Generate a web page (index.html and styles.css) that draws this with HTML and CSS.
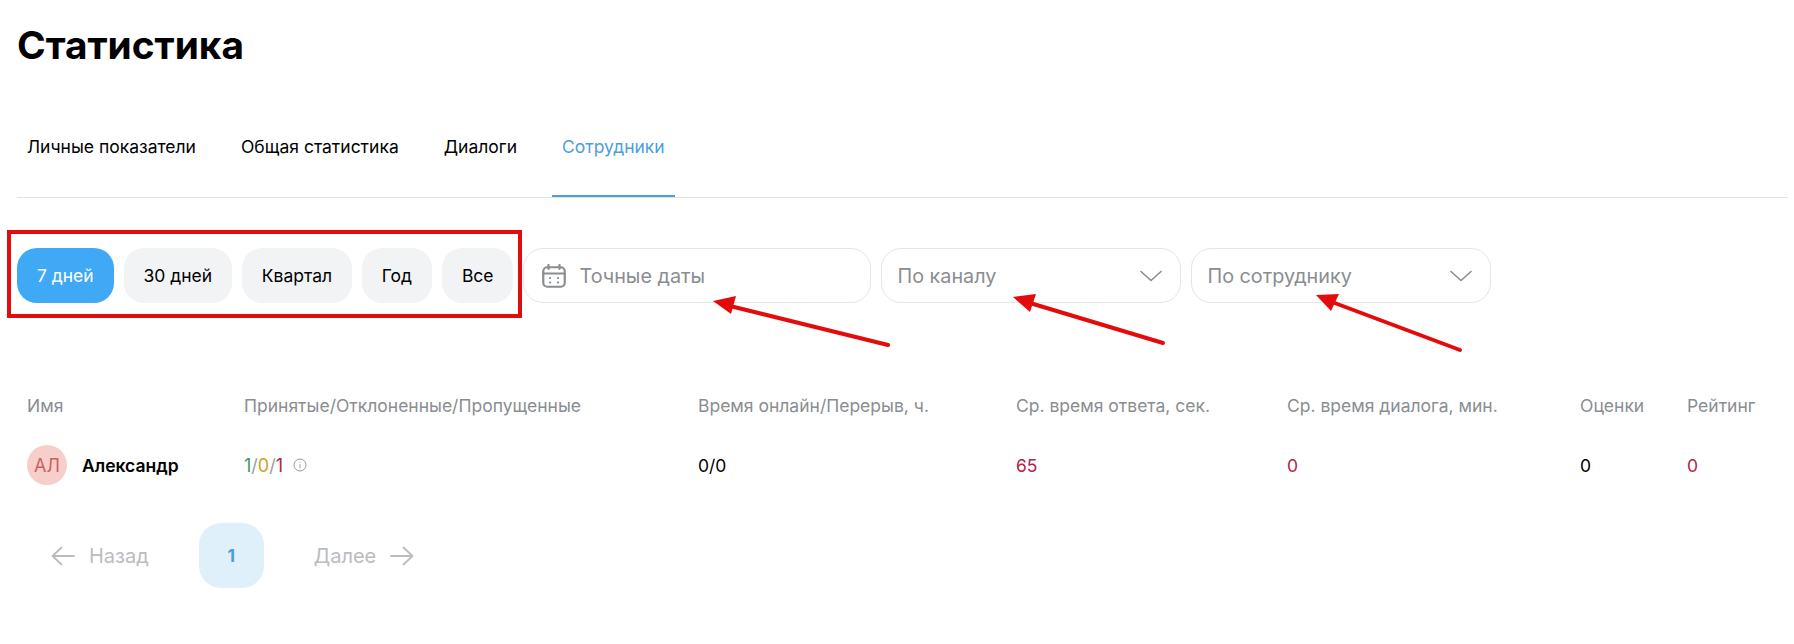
FILE: index.html
```html
<!DOCTYPE html>
<html lang="ru">
<head>
    <meta charset="UTF-8">
    <meta name="viewport" content="width=device-width, initial-scale=1.0">
    <title>Статистика</title>
    <link rel="stylesheet" href="styles.css">
</head>
<body>

<h1>Статистика</h1>

<div class="tabs">
    <a class="tab" href="#">Личные показатели</a>
    <a class="tab" href="#">Общая статистика</a>
    <a class="tab" href="#">Диалоги</a>
    <a class="tab active" href="#">Сотрудники</a>
</div>

<div class="filters">
    <button class="pill active">7 дней</button>
    <button class="pill">30 дней</button>
    <button class="pill">Квартал</button>
    <button class="pill">Год</button>
    <button class="pill">Все</button>
    <div class="field field-date">
        <svg width="24" height="24" viewBox="0 0 24 24" fill="none" stroke="#8a8d91" stroke-width="2.2" stroke-linecap="round">
            <rect x="1.250" y="3.250" width="21.500" height="19.500" rx="4"/>
            <path d="M1.250 9.500h21.500M6.500 1v4M17.500 1v4"/>
            <path d="M8 14h.1M16 14h.1M8 18.500h.1M16 18.500h.1"/>
        </svg>
        <span>Точные даты</span>
    </div>
    <div class="field field-select">
        <span>По каналу</span>
        <svg width="22" height="12" viewBox="0 0 22 12" fill="none" stroke="#8a8d91" stroke-width="1.6" stroke-linecap="round" stroke-linejoin="round"><path d="M1 1.500l10 9 10-9"/></svg>
    </div>
    <div class="field field-select">
        <span>По сотруднику</span>
        <svg width="22" height="12" viewBox="0 0 22 12" fill="none" stroke="#8a8d91" stroke-width="1.6" stroke-linecap="round" stroke-linejoin="round"><path d="M1 1.500l10 9 10-9"/></svg>
    </div>
</div>

<div class="table">
    <div class="row head">
        <div>Имя</div>
        <div>Принятые/Отклоненные/Пропущенные</div>
        <div>Время онлайн/Перерыв, ч.</div>
        <div>Ср. время ответа, сек.</div>
        <div>Ср. время диалога, мин.</div>
        <div>Оценки</div>
        <div>Рейтинг</div>
    </div>
    <div class="row body">
        <div class="person">
            <span class="avatar">АЛ</span>
            <span class="name">Александр</span>
        </div>
        <div class="calls">
            <span class="green">1</span><span class="slash">/</span><span class="yellow">0</span><span class="slash">/</span><span class="red">1</span>
            <svg class="info" width="14" height="14" viewBox="0 0 14 14" fill="none" stroke="#9a9da1" stroke-width="1"><circle cx="7" cy="7" r="6"/><path d="M7 6.200v4M7 3.800v1"/></svg>
        </div>
        <div>0/0</div>
        <div class="red">65</div>
        <div class="red">0</div>
        <div>0</div>
        <div class="red">0</div>
    </div>
</div>

<div class="pager">
    <a class="pager-link" href="#">
        <svg width="24" height="20" viewBox="0 0 24 20" fill="none" stroke="#b9bcc0" stroke-width="1.8" stroke-linecap="round" stroke-linejoin="round"><path d="M23 10H1.500M10.500 1.500L1.500 10l9 8.500"/></svg>
        Назад
    </a>
    <span class="page">1</span>
    <a class="pager-link" href="#">
        Далее
        <svg width="24" height="20" viewBox="0 0 24 20" fill="none" stroke="#b9bcc0" stroke-width="1.8" stroke-linecap="round" stroke-linejoin="round"><path d="M1 10h21.500M13.500 1.500l9 8.500-9 8.500"/></svg>
    </a>
</div>

<!-- пометки поверх скриншота -->
<svg class="marks" width="1794" height="644" viewBox="0 0 1794 644" fill="none">
    <rect x="9" y="232" width="511" height="84" stroke="#e30c0c" stroke-width="4"/>
    <g stroke="#e30c0c" stroke-width="4" stroke-linecap="round">
        <path d="M888 345L730 306"/>
        <path d="M1163 343L1030 303"/>
        <path d="M1460 350L1332 302"/>
    </g>
    <g fill="#e30c0c">
        <path d="M713 301L736 296L731 314Z"/>
        <path d="M1013 297L1036 294L1030 312Z"/>
        <path d="M1316 295L1339 294L1331 311Z"/>
    </g>
</svg>

</body>
</html>
```
FILE: styles.css
```css
* {
    box-sizing: border-box;
}
body {
    position: relative;
    margin: 0;
    padding: 0 6px 0 17px;
    height: 644px;
    overflow: hidden;
    font-family: Inter, "Noto Sans", sans-serif;
    font-size: 17.5px;
    color: #000;
    background-color: #fff;
}
h1 {
    margin: 0;
    padding-top: 21px;
    font-size: 38.8px;
    line-height: 48px;
    font-weight: 700;
}
.tabs {
    display: flex;
    gap: 25px;
    margin-top: 45px;
    border-bottom: 1px solid #dfe2e6;
}
.tab {
    padding: 0 10px;
    height: 83px;
    line-height: 66px;
    color: #000;
    text-decoration: none;
}
.tab.active {
    color: #4b9fd8;
    border-bottom: 2px solid #4b9fd8;
    margin-bottom: -1px;
}
.filters {
    display: flex;
    gap: 10px;
    margin-top: 50px;
}
.pill {
    height: 55px;
    padding: 0 19.9px;
    border: 0;
    border-radius: 20px;
    font: inherit;
    color: #000;
    background: #f2f3f5;
}
.pill.active {
    color: #fff;
    background: #3fa9f5;
}
.field {
    display: flex;
    align-items: center;
    height: 55px;
    border: 1px solid #e3e5e8;
    border-radius: 20px;
    font-size: 19.8px;
    color: #8a8d91;
}
.field-date {
    gap: 13px;
    width: 348px;
    padding: 0 18px;
}
.field-select {
    justify-content: space-between;
    width: 300px;
    padding: 0 18px 0 15px;
}
.row {
    display: grid;
    grid-template-columns: 217px 454px 318px 271px 293px 107px 1fr;
    padding-left: 10px;
    align-items: center;
}
.head {
    margin-top: 89px;
    height: 26px;
    color: #8a8d91;
}
.body {
    margin-top: 27px;
    height: 40px;
}
.person {
    display: flex;
    align-items: center;
    gap: 15px;
}
.avatar {
    display: flex;
    align-items: center;
    justify-content: center;
    width: 40px;
    height: 40px;
    border-radius: 50%;
    font-size: 18px;
    color: #c9625f;
    background: #f6cfcd;
}
.name {
    font-weight: 600;
}
.calls {
    display: flex;
    align-items: center;
    font-size: 18px;
}
.info {
    margin-left: 10px;
}
.green {
    color: #3d9a66;
}
.yellow {
    color: #c9a227;
}
.slash {
    color: #9a9da1;
}
.red {
    color: #b8214a;
}
.pager {
    display: flex;
    align-items: center;
    margin-top: 38px;
    padding-left: 34px;
}
.pager-link {
    display: flex;
    align-items: center;
    gap: 14px;
    font-size: 20px;
    color: #b9bcc0;
    text-decoration: none;
}
.page {
    display: flex;
    align-items: center;
    justify-content: center;
    width: 65px;
    height: 65px;
    margin: 0 50px;
    border-radius: 22px;
    font-weight: 700;
    color: #4b9fd8;
    background: #dff0fb;
}
.marks {
    position: absolute;
    top: 0;
    left: 0;
    pointer-events: none;
}
```
